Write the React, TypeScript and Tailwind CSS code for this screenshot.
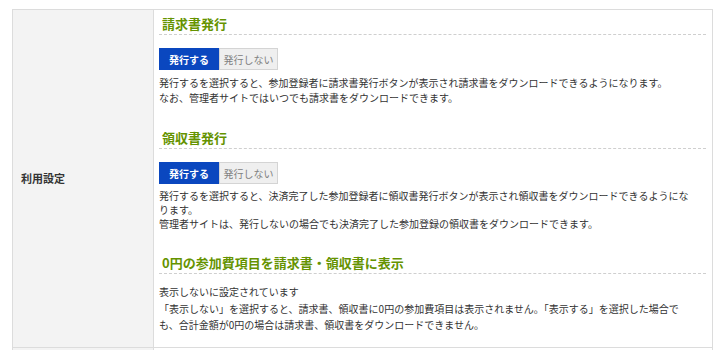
import React from "react";

const font = {
  fontFamily: '"Noto Sans CJK JP", "Noto Sans", sans-serif',
};

function Heading({ children }: { children: React.ReactNode }) {
  return (
    <div className="border-b border-dashed border-[#cfcfcf] pl-[3px] pb-[1px] text-[13px] font-bold leading-[19px] text-[#659300]">
      {children}
    </div>
  );
}

function Toggle() {
  return (
    <div className="mt-[13px] flex h-[22px] text-[10px]">
      <div className="flex w-[60px] items-center justify-center bg-[#0a47bf] font-bold text-white">
        発行する
      </div>
      <div className="flex w-[59px] items-center justify-center border border-[#d4d4d4] bg-[#efefef] text-[#808080]">
        発行しない
      </div>
    </div>
  );
}

export default function App() {
  return (
    <div className="h-[350px] w-[723px] overflow-hidden bg-white pl-[12px] pt-[9px] text-[#333]" style={font}>
      <div className="w-[701px] border border-[#dcdcdc]">
        <div className="flex">
          <div className="flex w-[141px] shrink-0 items-center border-r border-[#dcdcdc] bg-[#f3f3f3] pl-[8px] text-[11px] font-bold text-[#333]">
            利用設定
          </div>
          <div className="flex-1 pl-[5px] pr-[6px] pb-[14px] pt-[4px]">
            <div className="mb-[23px]">
              <Heading>請求書発行</Heading>
              <Toggle />
              <div className="mt-[5px] w-[545px] text-[10px] leading-[15px]">
                <p>発行するを選択すると、参加登録者に請求書発行ボタンが表示され請求書をダウンロードできるようになります。</p>
                <p>なお、管理者サイトではいつでも請求書をダウンロードできます。</p>
              </div>
            </div>
            <div className="mb-[22px]">
              <Heading>領収書発行</Heading>
              <Toggle />
              <div className="mt-[5px] w-[535px] text-[10px] leading-[14px]">
                <p>発行するを選択すると、決済完了した参加登録者に領収書発行ボタンが表示され領収書をダウンロードできるようになります。</p>
                <p>管理者サイトは、発行しないの場合でも決済完了した参加登録の領収書をダウンロードできます。</p>
              </div>
            </div>
            <div>
              <Heading>0円の参加費項目を請求書・領収書に表示</Heading>
              <div className="mt-[10px] w-[531px] text-[10px] leading-[15px]">
                <p>表示しないに設定されています</p>
                <p className="mt-[2px] leading-[16px]">
                  「表示しない」を選択すると、請求書、領収書に0円の参加費項目は表示されません。「表示する」を選択した場合でも、合計金額が0円の場合は請求書、領収書をダウンロードできません。
                </p>
              </div>
            </div>
          </div>
        </div>
        <div className="flex h-[20px] border-t border-[#dcdcdc]">
          <div className="w-[141px] border-r border-[#dcdcdc] bg-[#f3f3f3]" />
          <div className="flex-1" />
        </div>
      </div>
    </div>
  );
}
